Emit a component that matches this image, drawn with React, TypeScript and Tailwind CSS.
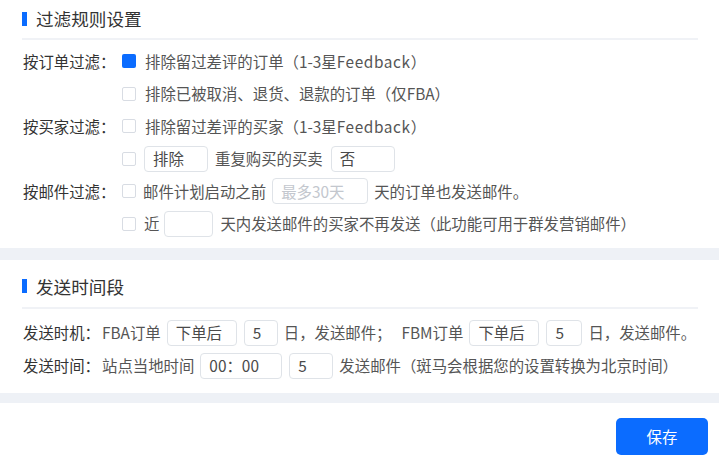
import React from "react";

const FONT = { fontFamily: '"Noto Sans CJK SC", "Noto Sans", sans-serif' };

function Checkbox({ checked = false }: { checked?: boolean }) {
  return checked ? (
    <span className="inline-block w-[14px] h-[14px] shrink-0 rounded-[2px] bg-[#0b6cff]" />
  ) : (
    <span className="inline-block w-[14px] h-[14px] shrink-0 rounded-[2px] border border-[#d8dce3] bg-white" />
  );
}

function Box({ className, children, placeholder }: { className: string; children?: React.ReactNode; placeholder?: boolean }) {
  return (
    <span
      className={
        "inline-flex items-center h-[26px] shrink-0 rounded-[4px] border border-[#dfe3e8] bg-white pl-[8px] " +
        (placeholder ? "text-[#c3c7ce] " : "text-[#4a4a4a] ") +
        className
      }
    >
      {children}
    </span>
  );
}

function Title({ children }: { children: React.ReactNode }) {
  return (
    <div className="flex items-center h-[28px]">
      <span className="w-[5px] h-[14px] bg-[#0b6cff]" />
      <span className="ml-[9px] text-[17.6px] text-[#333333]">{children}</span>
    </div>
  );
}

export default function App() {
  return (
    <div className="w-[719px] h-[461px] bg-white text-[15.4px] leading-none overflow-hidden" style={FONT}>
      {/* Section 1 */}
      <div className="pl-[22px] pr-[21px] pt-[5px] pb-[7.75px]">
        <Title>过滤规则设置</Title>
        <div className="mt-[4.7px] h-[2px] bg-[#f0f2f6]" />
        <div className="mt-[5.5px] flex flex-col text-[#555555]">
          <div className="flex items-center h-[32.5px]">
            <span className="w-[100px] pl-[1px] text-[#333333]">按订单过滤：</span>
            <Checkbox checked />
            <span className="ml-[9px]">
              排除留过差评的订单（1-3星<span className="tracking-[0.6px]">Feedback</span>）
            </span>
          </div>
          <div className="flex items-center h-[32.5px]">
            <span className="w-[100px]" />
            <Checkbox />
            <span className="ml-[9px]">排除已被取消、退货、退款的订单（仅FBA）</span>
          </div>
          <div className="flex items-center h-[32.5px]">
            <span className="w-[100px] pl-[1px] text-[#333333]">按买家过滤：</span>
            <Checkbox />
            <span className="ml-[9px]">
              排除留过差评的买家（1-3星<span className="tracking-[0.6px]">Feedback</span>）
            </span>
          </div>
          <div className="flex items-center h-[32.5px]">
            <span className="w-[100px]" />
            <Checkbox />
            <Box className="ml-[8px] w-[64px]">排除</Box>
            <span className="ml-[7px]">重复购买的买卖</span>
            <Box className="ml-[8px] w-[64px] pl-[7px]">否</Box>
          </div>
          <div className="flex items-center h-[32.5px]">
            <span className="w-[100px] pl-[1px] text-[#333333]">按邮件过滤：</span>
            <Checkbox />
            <span className="ml-[7px]">邮件计划启动之前</span>
            <Box className="ml-[6px] w-[96px]" placeholder>
              最多30天
            </Box>
            <span className="ml-[6px]">天的订单也发送邮件。</span>
          </div>
          <div className="flex items-center h-[32.5px]">
            <span className="w-[100px]" />
            <Checkbox />
            <span className="ml-[8px]">近</span>
            <Box className="ml-[5px] w-[49px]" />
            <span className="ml-[7px]">天内发送邮件的买家不再发送（此功能可用于群发营销邮件）</span>
          </div>
        </div>
      </div>

      <div className="h-[12px] bg-[#eef1f6]" />

      {/* Section 2 */}
      <div className="pl-[22px] pr-[21px] pt-[12.5px] pb-[10.5px]">
        <Title>发送时间段</Title>
        <div className="mt-[7px] h-[2px] bg-[#f0f2f6]" />
        <div className="mt-[7px] flex flex-col text-[#555555]">
          <div className="flex items-center h-[33px]">
            <span className="w-[80px] pl-[1px] text-[#333333]">发送时机：</span>
            <span>FBA订单</span>
            <Box className="ml-[6px] w-[70px]">下单后</Box>
            <Box className="ml-[7px] w-[34px]">5</Box>
            <span className="ml-[6px]">日，发送邮件；</span>
            <span className="ml-[10px]">FBM订单</span>
            <Box className="ml-[6px] w-[70px]">下单后</Box>
            <Box className="ml-[7px] w-[36px]">5</Box>
            <span className="ml-[6px]">日，发送邮件。</span>
          </div>
          <div className="flex items-center h-[33px]">
            <span className="w-[80px] pl-[1px] text-[#333333]">发送时间：</span>
            <span>站点当地时间</span>
            <Box className="ml-[6px] w-[82px]">00：00</Box>
            <Box className="ml-[7px] w-[44px]">5</Box>
            <span className="ml-[6px]">发送邮件（斑马会根据您的设置转换为北京时间）</span>
          </div>
        </div>
      </div>

      <div className="h-[10px] bg-[#eef1f6]" />

      {/* Footer */}
      <div className="flex justify-end pt-[15px] pr-[11px]">
        <button className="w-[92px] h-[37px] rounded-[5px] bg-[#0b6cff] text-white text-[15.4px]">保存</button>
      </div>
    </div>
  );
}
